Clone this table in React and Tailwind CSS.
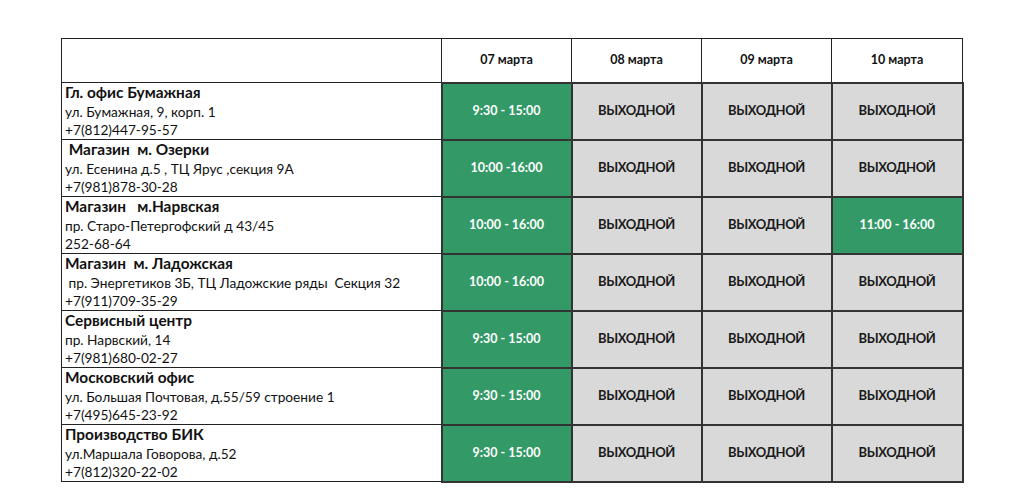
import React from 'react'

const days = ['07 марта', '08 марта', '09 марта', '10 марта']

const rows = [
  {
    title: 'Гл. офис Бумажная',
    addr: 'ул. Бумажная, 9, корп. 1',
    phone: '+7(812)447-95-57',
    hours: ['9:30 - 15:00', null, null, null],
  },
  {
    title: '\u00a0Магазин  м. Озерки',
    addr: 'ул. Есенина д.5 , ТЦ Ярус ,секция 9А',
    phone: '+7(981)878-30-28',
    hours: ['10:00 -16:00', null, null, null],
  },
  {
    title: 'Магазин   м.Нарвская',
    addr: 'пр. Старо-Петергофский д 43/45',
    phone: '252-68-64',
    hours: ['10:00 - 16:00', null, null, '11:00 - 16:00'],
  },
  {
    title: 'Магазин  м. Ладожская',
    addr: '\u00a0пр. Энергетиков 3Б, ТЦ Ладожские ряды  Секция 32',
    phone: '+7(911)709-35-29',
    hours: ['10:00 - 16:00', null, null, null],
  },
  {
    title: 'Сервисный центр',
    addr: 'пр. Нарвский, 14',
    phone: '+7(981)680-02-27',
    hours: ['9:30 - 15:00', null, null, null],
  },
  {
    title: 'Московский офис',
    addr: 'ул. Большая Почтовая, д.55/59 строение 1',
    phone: '+7(495)645-23-92',
    hours: ['9:30 - 15:00', null, null, null],
  },
  {
    title: 'Производство БИК',
    addr: 'ул.Маршала Говорова, д.52',
    phone: '+7(812)320-22-02',
    hours: ['9:30 - 15:00', null, null, null],
  },
]

const App = () => {
  return (
    <div
      className="w-[1024px] h-[502px] bg-white pt-[38px] pl-[61px]"
      style={{ fontFamily: 'Lato, "Liberation Sans", sans-serif' }}
    >
      <table className="border-collapse border border-[#222] text-[#111] table-fixed w-[901px]">
        <colgroup>
          <col className="w-[380px]" />
          <col className="w-[130px]" />
          <col className="w-[130px]" />
          <col className="w-[130px]" />
          <col className="w-[131px]" />
        </colgroup>
        <thead>
          <tr className="h-[44px]">
            <th className="border border-[#222]"></th>
            {days.map((d) => (
              <th key={d} className="border border-[#222] text-[12.5px] font-bold text-center">
                {d}
              </th>
            ))}
          </tr>
        </thead>
        <tbody>
          {rows.map((r) => (
            <tr key={r.title} className="h-[57px]">
              <td className="border border-[#222] px-[3px] py-0 align-middle">
                <div className="text-[15.4px] font-bold leading-[19px] whitespace-pre">{r.title}</div>
                <div className="text-[13.7px] leading-[19px] whitespace-pre">{r.addr}</div>
                <div className="text-[13.7px] leading-[18px]">{r.phone}</div>
              </td>
              {r.hours.map((h, i) =>
                h ? (
                  <td
                    key={i}
                    className="border-2 border-[#333] bg-[#339966] text-white text-[12.5px] font-bold text-center"
                  >
                    {h}
                  </td>
                ) : (
                  <td
                    key={i}
                    className="border-2 border-[#333] bg-[#d9d9d9] text-[#1a1a1a] text-[13px] tracking-[-0.4px] font-bold text-center"
                  >
                    ВЫХОДНОЙ
                  </td>
                )
              )}
            </tr>
          ))}
        </tbody>
      </table>
    </div>
  )
}

export default App
